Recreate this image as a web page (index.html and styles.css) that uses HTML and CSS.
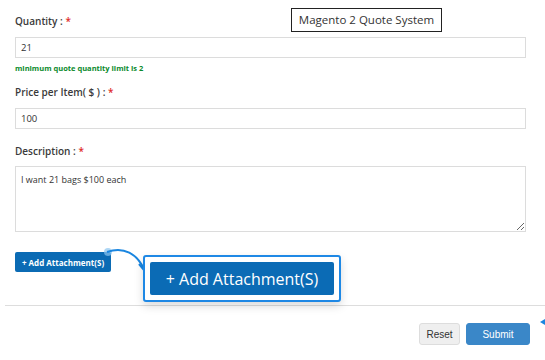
FILE: index.html
```html
<!DOCTYPE html>
<html>
<head>
    <meta charset="UTF-8">
    <title>Quote Form</title>
    <link rel="stylesheet" href="styles.css">
</head>
<body>
    <!-- quote form -->
    <div class="quote-form">
        <div class="field">
            <label>Quantity : <span class="req">*</span></label>
            <input class="text-input" type="text" value="21">
            <p class="hint">minimum quote quantity limit is 2</p>
        </div>
        <div class="field">
            <label>Price per Item( $ ) : <span class="req">*</span></label>
            <input class="text-input" type="text" value="100">
        </div>
        <div class="field">
            <label>Description : <span class="req">*</span></label>
            <textarea class="text-area">I want 21 bags $100 each</textarea>
        </div>
        <button class="attach-btn" type="button">+ Add Attachment(S)</button>
    </div>

    <hr class="divider">

    <!-- bottom actions -->
    <div class="actions">
        <button class="reset-btn" type="button">Reset</button>
        <button class="submit-btn" type="button">Submit</button>
    </div>

    <!-- overlays -->
    <div class="tooltip">Magento 2 Quote System</div>

    <svg class="pointer" width="60" height="40" viewBox="0 0 60 40">
        <circle cx="6" cy="6" r="4" fill="#8cc4f0" opacity="0.7"/>
        <path d="M5 6 C 22 0, 35 8, 42 23" fill="none" stroke="#1a86e0" stroke-width="2"/>
        <path d="M37 18 L42 24 L44 16" fill="none" stroke="#1a86e0" stroke-width="2"/>
    </svg>

    <div class="callout">
        <div class="callout-btn">+ Add Attachment(S)</div>
    </div>

    <span class="edge-arrow"></span>
</body>
</html>
```

FILE: styles.css
```css
/* page */
body {
    margin: 0;
    background: #fff;
    font-family: "Open Sans", sans-serif;
    color: #333;
    position: relative;
    width: 545px;
    height: 360px;
    overflow: hidden;
}

/* form body */
.quote-form {
    padding: 13px 19px 0 15px;
    display: flex;
    flex-direction: column;
    align-items: flex-start;
}

.field {
    width: 100%;
    margin-bottom: 14px;
}

.field label {
    display: block;
    font-size: 10px;
    line-height: 16px;
    font-weight: 600;
    color: #3a3a3a;
    margin-bottom: 8px;
}

.req {
    color: #e02b27;
}

.text-input {
    display: block;
    box-sizing: border-box;
    width: 100%;
    height: 21px;
    border: 1px solid #dcdcdc;
    padding: 0 5px;
    font-family: "Open Sans", sans-serif;
    font-size: 9.5px;
    color: #333;
    outline: none;
}

.hint {
    margin: 4px 0 -4px;
    font-size: 7.5px;
    line-height: 12px;
    font-weight: 700;
    color: #0a8a2c;
}

.text-area {
    display: block;
    box-sizing: border-box;
    width: 100%;
    height: 66px;
    margin-top: -1px;
    border: 1px solid #dcdcdc;
    padding: 6px 5px;
    font-family: "Open Sans", sans-serif;
    font-size: 9px;
    color: #333;
    resize: vertical;
    outline: none;
}

.attach-btn {
    margin-top: 6px;
    width: 96px;
    height: 20px;
    padding: 0;
    border: none;
    border-radius: 2px;
    background: #0b6bb4;
    color: #fff;
    font-family: "Open Sans", sans-serif;
    font-size: 8px;
    font-weight: 700;
}

/* divider line */
.divider {
    margin: 33px 0 0 5px;
    border: none;
    border-top: 1px solid #ddd;
}

.actions {
    display: flex;
    justify-content: flex-end;
    gap: 6px;
    padding: 17px 15px 0 0;
}

.reset-btn, .submit-btn {
    height: 22px;
    border-radius: 3px;
    font-family: "Liberation Sans", Arial, sans-serif;
    font-size: 10px;
}

.reset-btn {
    width: 41px;
    background: #efefef;
    border: 1px solid #ddd;
    color: #333;
}

.submit-btn {
    width: 64px;
    background: #3a87c8;
    border: 1px solid #3a87c8;
    color: #fff;
}

/* tooltip */
.tooltip {
    position: absolute;
    left: 291px;
    top: 8px;
    width: 151px;
    height: 24px;
    box-sizing: border-box;
    border: 1px solid #222;
    background: #fff;
    font-family: "Open Sans", sans-serif;
    font-size: 11.5px;
    line-height: 22px;
    text-align: center;
    color: #333;
}

/* zoom callout */
.pointer {
    position: absolute;
    left: 102px;
    top: 246px;
}

.callout {
    position: absolute;
    left: 143px;
    top: 255px;
    width: 198px;
    height: 47px;
    box-sizing: border-box;
    border: 2px solid #1e88e5;
    border-radius: 3px;
    background: #fff;
    padding: 5px;
    box-shadow: 0 4px 10px rgba(0, 0, 0, 0.15);
}

.callout-btn {
    height: 100%;
    border-radius: 2px;
    background: #0b6bb5;
    color: #fff;
    font-size: 16px;
    display: flex;
    justify-content: center;
    align-items: center;
}

.edge-arrow {
    position: absolute;
    left: 540px;
    top: 319px;
    border-top: 3px solid transparent;
    border-bottom: 3px solid transparent;
    border-right: 5px solid #1a86e0;
}
```
